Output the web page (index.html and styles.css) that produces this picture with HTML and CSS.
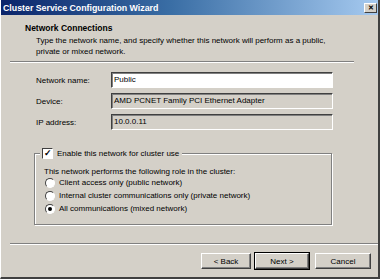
FILE: index.html
```html
<!DOCTYPE html>
<html lang="en">
<head>
    <meta charset="UTF-8">
    <title>Cluster Service Configuration Wizard</title>
    <link rel="stylesheet" href="styles.css">
</head>
<body>
    <div class="window">
        <div class="titlebar">
            <span class="title">Cluster Service Configuration Wizard</span>
            <span class="close">&#x2715;</span>
        </div>

        <!-- Header -->
        <div class="header">
            <div class="header-title">Network Connections</div>
            <div class="header-text">Type the network name, and specify whether this network will perform as a public,<br>private or mixed network.</div>
        </div>
        <div class="sep sep-top"></div>

        <!-- Fields -->
        <div class="content">
            <div class="row">
                <label class="label">Network name:</label>
                <div class="field edit">Public</div>
            </div>
            <div class="row">
                <label class="label">Device:</label>
                <div class="field">AMD PCNET Family PCI Ethernet Adapter</div>
            </div>
            <div class="row">
                <label class="label">IP address:</label>
                <div class="field">10.0.0.11</div>
            </div>

            <div class="group">
                <div class="legend">
                    <span class="check">&#x2713;</span>
                    <span>Enable this network for cluster use</span>
                </div>
                <div class="group-text">This network performs the following role in the cluster:</div>
                <div class="radio"><span class="dot"></span>Client access only (public network)</div>
                <div class="radio"><span class="dot"></span>Internal cluster communications only (private network)</div>
                <div class="radio"><span class="dot on"></span>All communications (mixed network)</div>
            </div>
        </div>

        <div class="sep sep-bottom"></div>
        <div class="buttons">
            <button class="btn">&lt; Back</button>
            <button class="btn default">Next &gt;</button>
            <button class="btn cancel">Cancel</button>
        </div>
    </div>
</body>
</html>
```

FILE: styles.css
```css
html, body {
    margin: 0;
    padding: 0;
    background-color: #d4d0c8;
    font-family: "Liberation Sans", Arial, sans-serif;
    font-size: 8px;
    color: #000;
}
.window {
    width: 380px;
    height: 279px;
    box-sizing: border-box;
    border-right: 2px solid #404040;
    border-bottom: 2px solid #404040;
    border-left: 1px solid #ffffff;
    background-color: #d4d0c8;
}
.titlebar {
    height: 15px;
    background: linear-gradient(to right, #0a246a 0%, #3a6ea5 45%, #a6caf0 100%);
    display: flex;
    align-items: center;
    justify-content: space-between;
    padding: 0 1px 0 2px;
}
.title {
    color: #fff;
    font-weight: bold;
    font-size: 8.8px;
}
.close {
    width: 11px;
    height: 8px;
    background: #d4d0c8;
    border: 1px solid;
    border-color: #fff #404040 #404040 #fff;
    font-size: 7px;
    font-weight: bold;
    line-height: 8px;
    text-align: center;
}
.header {
    padding: 7px 0 0 24px;
    height: 39px;
}
.header-title {
    font-weight: bold;
    font-size: 8.5px;
    line-height: 13px;
}
.header-text {
    padding-left: 11px;
    line-height: 11px;
}
.sep {
    height: 0;
    border-top: 1px solid #808080;
    border-bottom: 1px solid #ffffff;
    margin: 0 24px 0 9px;
}
.sep-bottom {
    margin: 0 0 0 9px;
}
.content {
    padding: 9px 0 0 35px;
    height: 180px;
    box-sizing: border-box;
}
.row {
    display: flex;
    align-items: center;
    height: 16px;
    margin-bottom: 5px;
}
.label {
    width: 75px;
}
.field {
    width: 218px;
    height: 14px;
    line-height: 14px;
    padding-left: 2px;
    border: 1px solid;
    border-color: #404040 #ffffff #ffffff #404040;
    box-shadow: inset 1px 1px 0 #808080;
    background: #d4d0c8;
    white-space: nowrap;
    overflow: hidden;
}
.edit {
    background: #ffffff;
}
.group {
    margin: 23px 0 0 -2px;
    width: 298px;
    height: 72px;
    border: 1px solid #808080;
    box-shadow: 1px 1px 0 #ffffff, inset 1px 1px 0 #ffffff;
    position: relative;
    padding: 11px 0 0 9px;
    box-sizing: border-box;
}
.legend {
    position: absolute;
    top: -7px;
    left: 5px;
    background: #d4d0c8;
    padding: 0 3px 0 2px;
    display: flex;
    align-items: center;
    gap: 4px;
    line-height: 13px;
}
.check {
    width: 9px;
    height: 9px;
    background: #fff;
    border: 1px solid;
    border-color: #404040 #fff #fff #404040;
    font-size: 9px;
    line-height: 9px;
    text-align: center;
    font-weight: bold;
}
.group-text {
    line-height: 13px;
    margin-bottom: -2px;
}
.radio {
    display: flex;
    align-items: center;
    height: 13px;
    padding-left: 1px;
}
.dot {
    width: 8px;
    height: 8px;
    border-radius: 50%;
    background: #fff;
    border: 1px solid;
    border-color: #404040 #fff #fff #404040;
    margin-right: 4px;
    position: relative;
}
.dot.on::after {
    content: "";
    position: absolute;
    left: 2px;
    top: 2px;
    width: 4px;
    height: 4px;
    border-radius: 50%;
    background: #000;
}
.buttons {
    display: flex;
    justify-content: flex-end;
    padding: 8px 7px 0 0;
    gap: 4px;
}
.btn {
    font-family: "Liberation Sans", Arial, sans-serif;
    font-size: 8px;
    width: 50px;
    height: 16px;
    padding: 0;
    background: #d4d0c8;
    border: 1px solid;
    border-color: #fff #404040 #404040 #fff;
    box-shadow: inset -1px -1px 0 #808080;
    color: #000;
}
.btn.default {
    width: 54px;
    outline: 1px solid #000;
}
.btn.cancel {
    width: 56px;
    margin-left: 2px;
}
```
